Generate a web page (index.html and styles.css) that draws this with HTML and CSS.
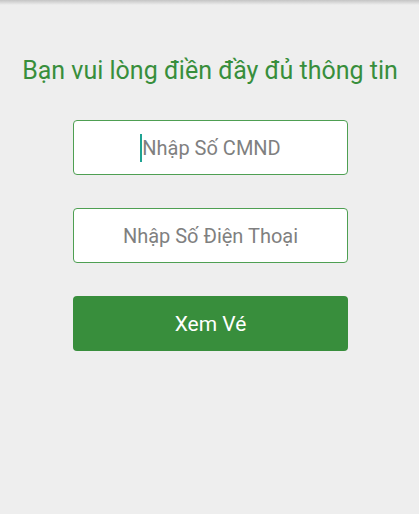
FILE: index.html
```html
<!DOCTYPE html>
<html lang="vi">
<head>
<meta charset="utf-8">
<title>Xem Vé</title>
<link rel="stylesheet" href="styles.css">
</head>
<body>
<div class="topshadow"></div>
<main class="page">
  <h1 class="title">Bạn vui lòng điền đầy đủ thông tin</h1>
  <form class="form">
    <div class="field field-focus"><span class="caret"></span><span class="ph">Nhập Số CMND</span></div>
    <div class="field"><span class="ph">Nhập Số Điện Thoại</span></div>
    <button type="button" class="btn">Xem Vé</button>
  </form>
</main>
</body>
</html>
```
FILE: styles.css
```css
html, body {
  margin: 0;
  padding: 0;
  background: #eeeeee;
  width: 419px;
  height: 514px;
  overflow: hidden;
  font-family: Roboto, "Noto Sans", sans-serif;
}
.topshadow {
  height: 5px;
  background: linear-gradient(#c4c4c4, #eeeeee);
}
.page {
  display: flex;
  flex-direction: column;
  align-items: center;
}
.title {
  margin: 50px 0 0 1px;
  font-size: 25px;
  font-weight: 400;
  color: #388e3c;
  line-height: 32px;
  text-align: center;
  white-space: nowrap;
}
.form {
  display: flex;
  flex-direction: column;
  gap: 33px;
  margin: 33px 0 0 2px;
  width: 275px;
}
.field {
  height: 55px;
  box-sizing: border-box;
  border: 1px solid #4e9f52;
  border-radius: 4px;
  background: #ffffff;
  display: flex;
  align-items: center;
  justify-content: center;
}
.ph {
  font-size: 20px;
  color: #808080;
}
.caret {
  width: 2px;
  height: 28px;
  background: #1fa392;
}
.btn {
  height: 55px;
  border: none;
  border-radius: 4px;
  background: #388e3c;
  color: #ffffff;
  font-family: Roboto, "Noto Sans", sans-serif;
  font-size: 21px;
  padding: 0;
}
```
